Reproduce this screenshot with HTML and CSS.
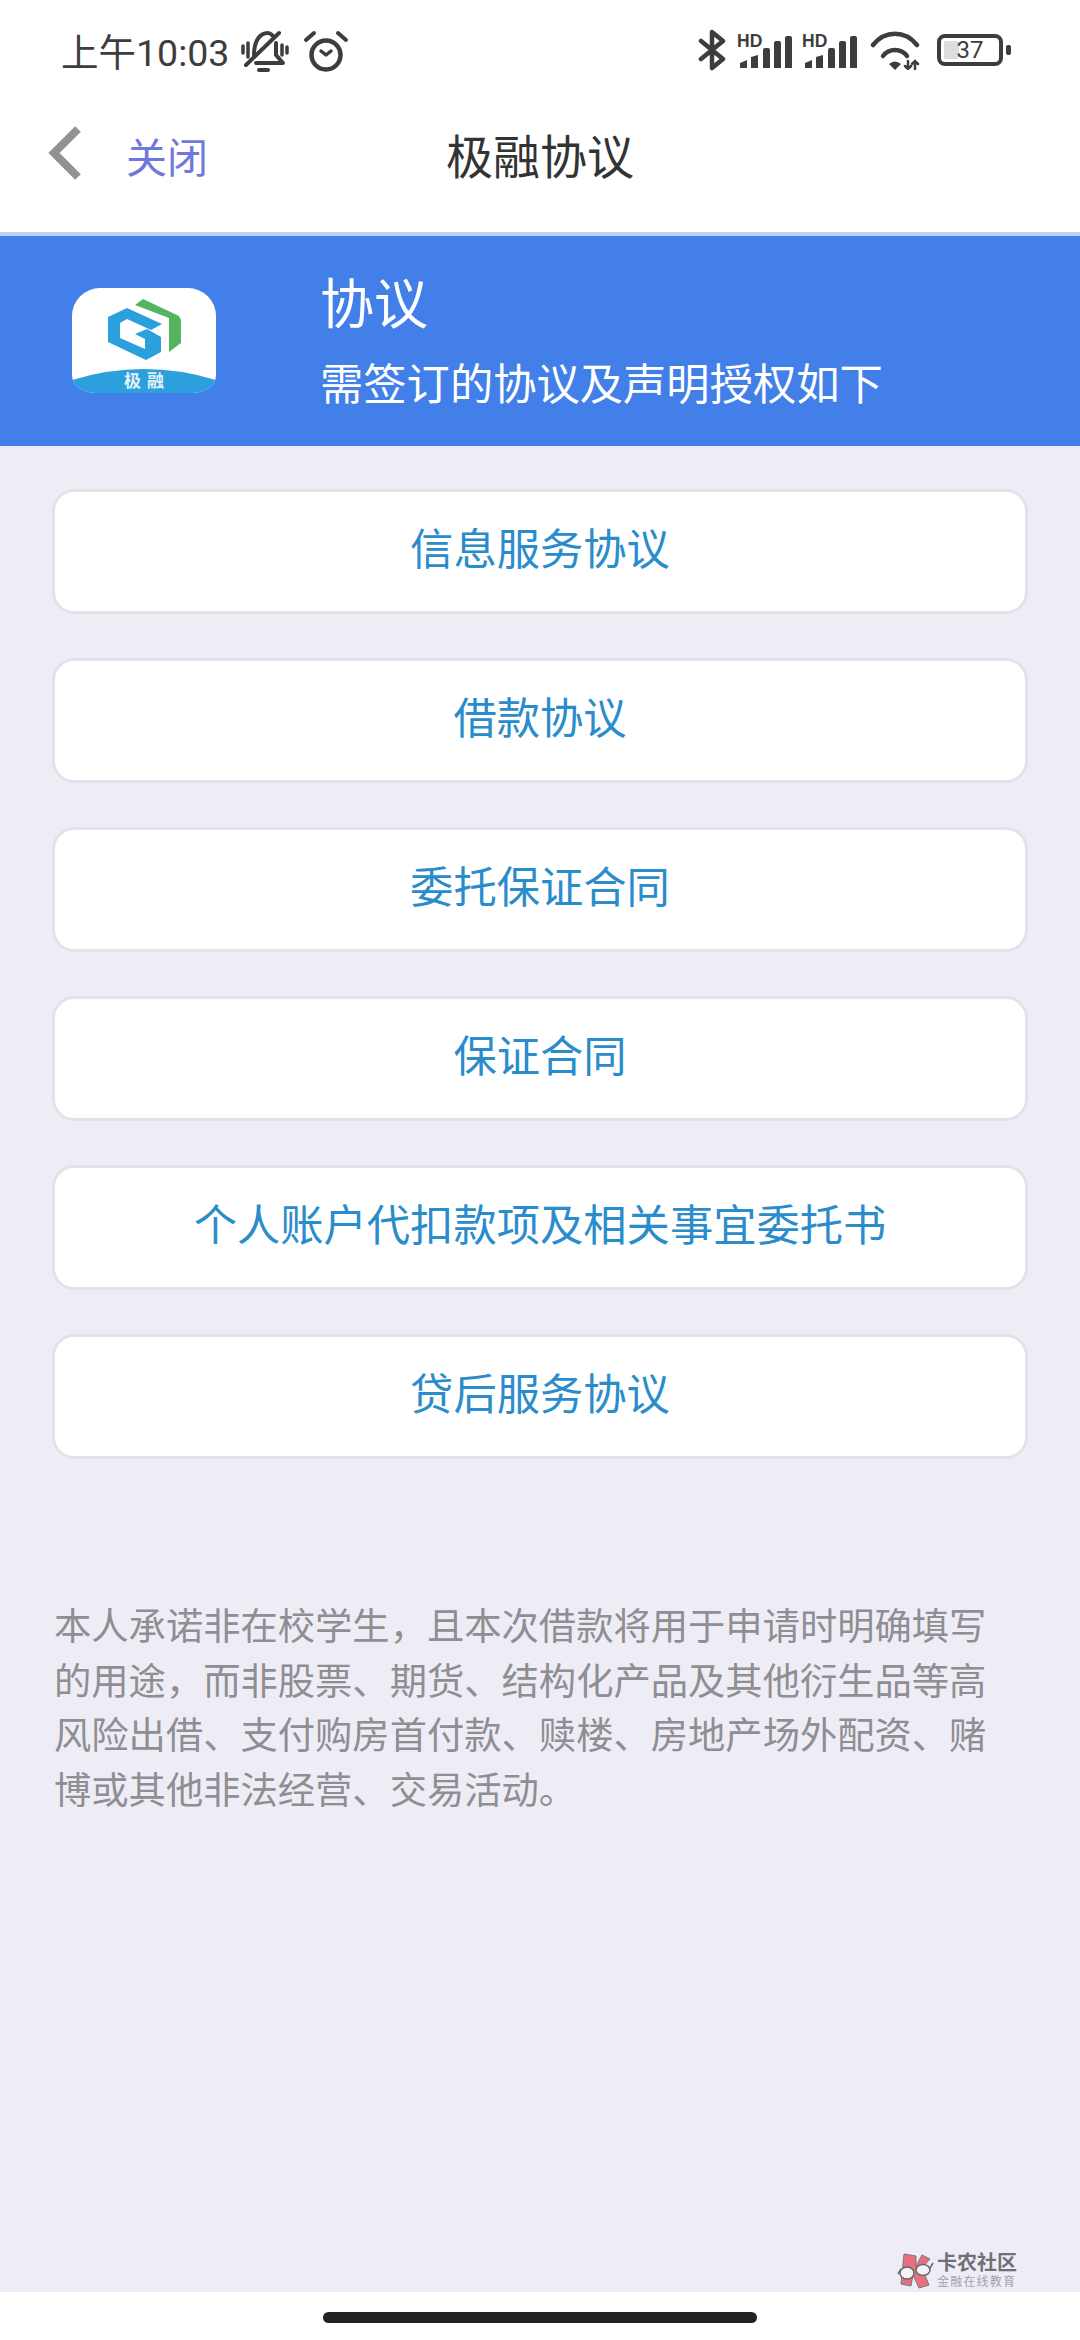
FILE: index.html
```html
<!DOCTYPE html>
<html lang="zh-CN">
<head>
  <meta charset="UTF-8" />
  <meta name="viewport" content="width=device-width, initial-scale=1.0"/>
  <title>极融协议</title>
  <link rel="stylesheet" href="styles.css">
</head>
<body>

  <div class="status-bar">
    <div class="status-left">
      <span class="clock">上午10:03</span>
      <svg class="icon-mute" viewBox="0 0 52 44" width="52" height="44" fill="none" stroke="#3d3d3d" stroke-width="4" stroke-linecap="round" stroke-linejoin="round">
        <path d="M15 27C15 14 20 5 29 5C31 5 32 6 33 7"/>
        <path d="M37 15V27L44 35H17"/>
        <path d="M7 37L40 5"/>
        <path d="M20 42H29"/>
        <path d="M4 18V25M9 15V29M43 17V27M48 19V25" stroke-width="3.5"/>
      </svg>
      <svg class="icon-alarm" viewBox="0 0 50 44" width="50" height="44" fill="none" stroke="#3d3d3d" stroke-linecap="round" stroke-linejoin="round">
        <circle cx="25" cy="27" r="14.5" stroke-width="4.5"/>
        <path d="M20 23L25 27L30 23" stroke-width="3.5"/>
        <path d="M5 12L13 5M45 12L37 5" stroke-width="4"/>
      </svg>
    </div>
    <div class="status-right">
      <svg class="icon-bt" viewBox="0 0 28 44" width="28" height="44" fill="none" stroke="#3d3d3d" stroke-width="4.5" stroke-linecap="round" stroke-linejoin="round">
        <path d="M3 13L25 31L14 40V4L25 13L3 31"/>
      </svg>
      <div class="signal">
        <span class="hd">HD</span>
        <svg viewBox="0 0 52 32" width="52" height="32" fill="#3d3d3d"><path d="M0 32V27L7 24V32ZM11 32V21L18 19V32ZM23 32V14Q23 12 25 12H28Q30 12 30 14V32ZM34 32V7Q34 5 36 5H39Q41 5 41 7V32ZM45 32V2Q45 0 47 0H50Q52 0 52 2V32Z"/></svg>
      </div>
      <div class="signal">
        <span class="hd">HD</span>
        <svg viewBox="0 0 52 32" width="52" height="32" fill="#3d3d3d"><path d="M0 32V27L7 24V32ZM11 32V21L18 19V32ZM23 32V14Q23 12 25 12H28Q30 12 30 14V32ZM34 32V7Q34 5 36 5H39Q41 5 41 7V32ZM45 32V2Q45 0 47 0H50Q52 0 52 2V32Z"/></svg>
      </div>
      <svg class="icon-wifi" viewBox="0 0 50 40" width="50" height="40" fill="none" stroke="#3d3d3d" stroke-width="4.5" stroke-linecap="round">
        <path d="M3 15C15 0 35 0 47 15"/>
        <path d="M13 26C19 18 31 18 37 26"/>
        <path d="M19 34Q25 29 31 34L25 40Z" fill="#3d3d3d" stroke="none"/>
        <path d="M38 31V39M35 36L38 39L41 36M45 39V31M42 34L45 31L48 34" stroke-width="2.5"/>
      </svg>
      <div class="battery">
        <div class="battery-body">
          <div class="battery-fill"></div>
          <span class="battery-num">37</span>
        </div>
        <div class="battery-cap"></div>
      </div>
    </div>
  </div>

  <div class="nav">
    <svg class="back" viewBox="0 0 34 54" width="34" height="54" fill="none" stroke="#929292" stroke-width="8">
      <path d="M30 3L6 27L30 51"/>
    </svg>
    <span class="close">关闭</span>
    <h1 class="nav-title">极融协议</h1>
  </div>

  <div class="banner">
    <div class="logo">
      <svg viewBox="0 0 144 105" width="144" height="105">
        <path d="M63 17L71 11L107 28L109 32V55L97 64V30Z" fill="#55b460"/>
        <path d="M36 29L55 20L90 36L79 42L55 31L48 35V50L73 61V51L63 46L75 41L89 49V64L74 72L36 54Z" fill="#2ba0dd"/>
        <path d="M0 92Q72 70 144 92V105H0Z" fill="#2ba0dd"/>
        <text class="logo-text" x="52" y="99">极融</text>
      </svg>
    </div>
    <div class="banner-text">
      <div class="banner-title">协议</div>
      <div class="banner-sub">需签订的协议及声明授权如下</div>
    </div>
  </div>

  <main class="content">
    <a class="doc-btn">信息服务协议</a>
    <a class="doc-btn">借款协议</a>
    <a class="doc-btn">委托保证合同</a>
    <a class="doc-btn">保证合同</a>
    <a class="doc-btn">个人账户代扣款项及相关事宜委托书</a>
    <a class="doc-btn">贷后服务协议</a>

    <p class="notice">本人承诺非在校学生，且本次借款将用于申请时明确填写的用途，而非股票、期货、结构化产品及其他衍生品等高风险出借、支付购房首付款、赎楼、房地产场外配资、赌博或其他非法经营、交易活动。</p>

    <div class="watermark">
      <svg viewBox="0 0 40 40" width="40" height="40">
        <path d="M8 3L20 5V15L26 4L34 8L26 17L33 34L23 37L17 24L15 35L5 33Z" fill="#e8707e" stroke="#77777c" stroke-width="1"/>
        <path d="M2 23L5 18M34 17L37 12" fill="none" stroke="#66666c" stroke-width="1.5"/>
        <ellipse cx="11" cy="22" rx="7" ry="6" fill="#f4f3f8" stroke="#66666c" stroke-width="1.5"/>
        <ellipse cx="27" cy="19" rx="7" ry="5.5" fill="#f4f3f8" stroke="#66666c" stroke-width="1.5"/>
      </svg>
      <div class="watermark-text">
        <div class="watermark-name">卡农社区</div>
        <div class="watermark-sub">金融在线教育</div>
      </div>
    </div>
  </main>

  <div class="home-area">
    <div class="home-bar"></div>
  </div>

</body>
</html>
```

FILE: styles.css
```css
* {
  box-sizing: border-box;
}
body {
  margin: 0;
  width: 1080px;
  height: 2340px;
  display: flex;
  flex-direction: column;
  background: #fff;
  font-family: "Noto Sans CJK SC", "Noto Sans", sans-serif;
  overflow: hidden;
}

/* status bar */
.status-bar {
  height: 100px;
  display: flex;
  align-items: center;
  justify-content: space-between;
  padding: 0 69px 0 61px;
  color: #3d3d3d;
}
.status-left, .status-right {
  display: flex;
  align-items: center;
}
.clock {
  font-family: Roboto, "Noto Sans CJK SC", sans-serif;
  font-size: 37.5px;
  padding-bottom: 2px;
}
.icon-mute {
  margin-left: 10px;
}
.icon-alarm {
  margin-left: 10px;
}
.status-right {
  gap: 10px;
}
.icon-bt {
  margin-right: 1px;
}
.icon-wifi {
  margin-left: 3px;
}
.signal {
  width: 55px;
  height: 44px;
  position: relative;
}
.signal svg {
  position: absolute;
  right: 0;
  bottom: 4px;
}
.hd {
  position: absolute;
  left: 0;
  top: 4px;
  font-family: "Liberation Sans", sans-serif;
  font-weight: 700;
  font-size: 17.5px;
  line-height: 18px;
}
.battery {
  display: flex;
  align-items: center;
  margin-left: 7px;
}
.battery-body {
  width: 66px;
  height: 32px;
  border: 4px solid #3d3d3d;
  border-radius: 8px;
  position: relative;
  display: flex;
  align-items: center;
  justify-content: center;
}
.battery-fill {
  position: absolute;
  left: 3px;
  top: 3px;
  bottom: 3px;
  width: 15px;
  background: #dedede;
  border-radius: 2px;
}
.battery-num {
  position: relative;
  font-family: Roboto, sans-serif;
  font-size: 24px;
  line-height: 24px;
}
.battery-cap {
  width: 5px;
  height: 10px;
  margin-left: 3px;
  background: #3d3d3d;
  border-radius: 2px;
}

/* nav */
.nav {
  height: 132px;
  position: relative;
  display: flex;
  align-items: center;
  padding: 0 0 0 48px;
}
.back {
  margin-top: -26px;
}
.close {
  margin-left: 44px;
  font-size: 41px;
  line-height: 1;
  color: #6f78dc;
  margin-top: -22px;
}
.nav-title {
  position: absolute;
  left: 0;
  right: 0;
  top: 28px;
  margin: 0;
  text-align: center;
  font-weight: 400;
  font-size: 47px;
  line-height: 1.1;
  color: #333;
}

/* blue banner */
.banner {
  height: 214px;
  background: #427fe8;
  border-top: 4px solid #bcd2f2;
  display: flex;
  align-items: center;
  padding-left: 72px;
  color: #fff;
}
.logo {
  width: 144px;
  height: 105px;
  background: #fff;
  border-radius: 28px 28px 24px 24px / 28px 28px 18px 18px;
  overflow: hidden;
  flex: none;
  margin-top: -1px;
}
.logo svg {
  display: block;
}
.logo-text {
  fill: #e4f3fb;
  font-size: 17px;
  font-weight: 700;
  letter-spacing: 6px;
}
.banner-text {
  margin-left: 104px;
  margin-top: -4px;
}
.banner-title {
  font-size: 54px;
  line-height: 70px;
}
.banner-sub {
  font-size: 43.3px;
  line-height: 64px;
  margin-top: 13px;
}

/* agreement list */
.content {
  flex: 1;
  position: relative;
  background: #eeedf6;
  padding: 43px 52px 0;
  display: flex;
  flex-direction: column;
  gap: 44px;
}
.doc-btn {
  height: 125px;
  background: #fff;
  border: 3px solid #e3e2ea;
  border-radius: 22px;
  display: flex;
  align-items: center;
  justify-content: center;
  padding-bottom: 12px;
  font-size: 43.3px;
  color: #2a8ccb;
}
.notice {
  margin: 94px 0 0;
  padding: 0 40px 0 2px;
  font-size: 37.3px;
  line-height: 54.7px;
  color: #8e8e93;
}
.watermark {
  position: absolute;
  right: 63px;
  bottom: 1px;
  display: flex;
  align-items: center;
  gap: 1px;
}
.watermark-text {
  font-family: "Liberation Sans", "Noto Sans CJK SC", sans-serif;
}
.watermark-name {
  font-size: 20px;
  line-height: 22px;
  font-weight: 700;
  color: #707078;
}
.watermark-sub {
  font-size: 12px;
  line-height: 16px;
  letter-spacing: 1.2px;
  color: #a3a3ab;
}

/* bottom gesture area */
.home-area {
  height: 48px;
  background: #fff;
  display: flex;
  justify-content: center;
  padding-top: 20px;
}
.home-bar {
  width: 434px;
  height: 11px;
  background: #222;
  border-radius: 6px;
}
```
